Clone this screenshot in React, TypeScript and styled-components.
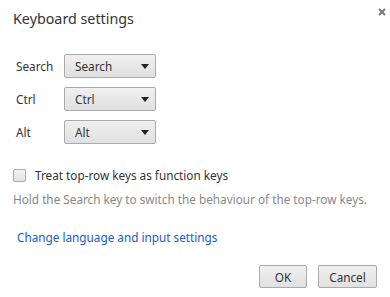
import styled, { createGlobalStyle } from "styled-components";

const GlobalStyle = createGlobalStyle`
  html, body {
    margin: 0;
    padding: 0;
    background: #fff;
  }
  body {
    font-family: "Noto Sans", "Open Sans", sans-serif;
    font-size: 11.75px;
    color: #333;
  }
`;

/**
 * Dialog frame
 */
const Dialog = styled.div`
  position: relative;
  width: 390px;
  height: 297px;
  box-sizing: border-box;
  padding: 8px 13px 0 13px;
  display: flex;
  flex-direction: column;
`;

const Title = styled.h1`
  margin: 0;
  font-size: 14.3px;
  font-weight: normal;
  line-height: 22px;
  color: #333;
`;

const CloseButton = styled.button`
  position: absolute;
  top: 6px;
  right: 2px;
  width: 12px;
  height: 12px;
  padding: 0;
  border: none;
  background: none;
  display: flex;
  align-items: center;
  justify-content: center;
`;

const KeyGrid = styled.div`
  display: grid;
  grid-template-columns: 48px 92px;
  row-gap: 9px;
  align-items: center;
  margin: 24px 0 0 3px;
`;

const KeyLabel = styled.label`
  line-height: 24px;
`;

const Select = styled.div`
  height: 24px;
  box-sizing: border-box;
  border: 1px solid #aaa;
  border-radius: 2px;
  background: linear-gradient(#f0f0f0, #e0e0e0);
  display: flex;
  align-items: center;
  justify-content: space-between;
  padding: 0 6px 0 10px;
  color: #333;
`;

const Arrow = styled.span`
  width: 0;
  height: 0;
  border-left: 4px solid transparent;
  border-right: 4px solid transparent;
  border-top: 5px solid #222;
`;

const CheckRow = styled.label`
  display: flex;
  align-items: center;
  gap: 9px;
  margin-top: 22px;
  line-height: 18px;
`;

const CheckBox = styled.span`
  width: 13px;
  height: 13px;
  box-sizing: border-box;
  border: 1px solid #aaa;
  border-radius: 2px;
  background: linear-gradient(#f3f3f3, #e3e3e3);
`;

const Hint = styled.p`
  margin: 6px 0 0 0;
  line-height: 18px;
  color: #888;
`;

const Link = styled.a`
  margin: 20px 0 0 4px;
  line-height: 18px;
  color: #1a5bc7;
  text-decoration: none;
`;

const ButtonBar = styled.div`
  display: flex;
  justify-content: flex-end;
  gap: 11px;
  margin-top: 19px;
`;

const Button = styled.button<{ $width: number }>`
  width: ${(p) => p.$width}px;
  height: 23px;
  box-sizing: border-box;
  border: 1px solid #aaa;
  border-radius: 2px;
  background: linear-gradient(#f0f0f0, #e0e0e0);
  font-family: inherit;
  font-size: 11.75px;
  color: #333;
  padding: 0;
`;

const rows = ["Search", "Ctrl", "Alt"];

const App = () => {
  return (
    <Dialog>
      <GlobalStyle />
      <Title>Keyboard settings</Title>
      <CloseButton aria-label="Close">
        <svg width="8" height="8" viewBox="0 0 8 8">
          <path d="M1 1L7 7M7 1L1 7" stroke="#777" strokeWidth="2" />
        </svg>
      </CloseButton>
      <KeyGrid>
        {rows.map((r) => [
          <KeyLabel key={r + "-l"}>{r}</KeyLabel>,
          <Select key={r + "-s"}>
            {r}
            <Arrow />
          </Select>,
        ])}
      </KeyGrid>
      <CheckRow>
        <CheckBox />
        Treat top-row keys as function keys
      </CheckRow>
      <Hint>Hold the Search key to switch the behaviour of the top-row keys.</Hint>
      <Link href="#">Change language and input settings</Link>
      <ButtonBar>
        <Button $width={48}>OK</Button>
        <Button $width={59}>Cancel</Button>
      </ButtonBar>
    </Dialog>
  );
};

export default App;
